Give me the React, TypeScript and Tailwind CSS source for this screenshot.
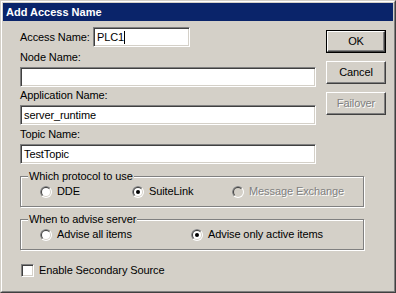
import React from "react";

function Radio({ checked = false, disabled = false }: { checked?: boolean; disabled?: boolean }) {
  return (
    <svg width="12" height="12" viewBox="0 0 12 12" className="shrink-0">
      <defs>
        <clipPath id="tl">
          <polygon points="0,0 12,0 0,12" />
        </clipPath>
      </defs>
      <circle cx="6" cy="6" r="6" fill="#ffffff" />
      <circle cx="6" cy="6" r="6" fill="#808080" clipPath="url(#tl)" />
      <circle cx="6" cy="6" r="5" fill="#d4d0c8" />
      <circle cx="6" cy="6" r="5" fill="#404040" clipPath="url(#tl)" />
      <circle cx="6" cy="6" r="4" fill={disabled ? "#d4d0c8" : "#ffffff"} />
      {checked && <circle cx="6" cy="6" r="2" fill="#000000" />}
    </svg>
  );
}

function TextBox({ value, caret = false, className = "" }: { value: string; caret?: boolean; className?: string }) {
  return (
    <div
      className={`h-[20px] bg-white border border-t-[#808080] border-l-[#808080] border-b-white border-r-white shadow-[inset_1px_1px_0_#404040,inset_-1px_-1px_0_#d4d0c8] flex items-center pl-[3px] ${className}`}
    >
      <span className="leading-[13px]">{value}</span>
      {caret && <span className="w-px h-[13px] bg-black" />}
    </div>
  );
}

function Button({ label, def = false, disabled = false }: { label: string; def?: boolean; disabled?: boolean }) {
  const inner = (
    <div className="w-full h-full border border-t-white border-l-white border-b-[#404040] border-r-[#404040] shadow-[inset_-1px_-1px_0_#808080] flex items-center justify-center">
      <span className={disabled ? "text-[#808080] [text-shadow:1px_1px_0_#ffffff]" : ""}>{label}</span>
    </div>
  );
  return (
    <div className={`w-[60px] h-[23px] ${def ? "border border-black" : ""}`}>{inner}</div>
  );
}

function Group({ title, children }: { title: string; children: React.ReactNode }) {
  return (
    <div className="relative w-[344px] h-[31px] border border-[#808080] shadow-[1px_1px_0_#ffffff,inset_1px_1px_0_#ffffff] flex items-center">
      <span className="absolute left-[7px] top-[-7px] bg-[#d4d0c8] px-[1px] leading-[13px]">{title}</span>
      {children}
    </div>
  );
}

function RadioItem({ label, checked = false, disabled = false, w }: { label: string; checked?: boolean; disabled?: boolean; w: string }) {
  return (
    <div className={`flex items-center gap-[5px] ${w}`}>
      <Radio checked={checked} disabled={disabled} />
      <span className={`leading-[13px] ${disabled ? "text-[#808080] [text-shadow:1px_1px_0_#ffffff]" : ""}`}>{label}</span>
    </div>
  );
}

export default function App() {
  return (
    <div className="w-[396px] h-[293px] bg-[#d4d0c8] font-['Liberation_Sans',Arial,sans-serif] text-[11px] tracking-[-0.1px] text-black overflow-hidden">
      <div className="w-full h-full border border-t-[#d4d0c8] border-l-[#d4d0c8] border-b-[#404040] border-r-[#404040]">
        <div className="w-full h-full border border-t-white border-l-white border-b-[#808080] border-r-[#808080] p-px flex flex-col">
          <div className="h-[18px] bg-[#0a246a] text-white font-bold text-[11px] tracking-normal flex items-center pl-[3px] shrink-0">
            Add Access Name
          </div>
          <div className="flex-1 pl-[17px] pt-[6px] flex flex-col">
            <div className="flex">
              <div className="w-[296px] flex flex-col">
                <div className="flex items-center">
                  <span className="w-[73px] leading-[13px]">Access Name:</span>
                  <TextBox value="PLC1" caret className="w-[97px]" />
                </div>
                <div className="mt-[4px] h-[13px] leading-[13px]">Node Name:</div>
                <TextBox value="" className="mt-[3px] w-[296px]" />
                <div className="mt-[2px] h-[13px] leading-[13px]">Application Name:</div>
                <TextBox value="server_runtime" className="mt-[3px] w-[296px]" />
                <div className="mt-[3px] h-[13px] leading-[13px]">Topic Name:</div>
                <TextBox value="TestTopic" className="mt-[3px] w-[296px]" />
              </div>
              <div className="ml-[10px] mt-[3px] flex flex-col gap-[8px]">
                <Button label="OK" def />
                <Button label="Cancel" />
                <Button label="Failover" disabled />
              </div>
            </div>
            <div className="mt-[12px]">
              <Group title="Which protocol to use">
                <div className="flex pl-[19px]">
                  <RadioItem label="DDE" w="w-[92px]" />
                  <RadioItem label="SuiteLink" checked w="w-[100px]" />
                  <RadioItem label="Message Exchange" disabled w="w-[120px]" />
                </div>
              </Group>
            </div>
            <div className="mt-[12px]">
              <Group title="When to advise server">
                <div className="flex pl-[19px]">
                  <RadioItem label="Advise all items" w="w-[151px]" />
                  <RadioItem label="Advise only active items" checked w="w-[150px]" />
                </div>
              </Group>
            </div>
            <div className="mt-[14px] flex items-center gap-[5px] pl-px">
              <div className="w-[13px] h-[13px] bg-white border border-t-[#808080] border-l-[#808080] border-b-white border-r-white shadow-[inset_1px_1px_0_#404040,inset_-1px_-1px_0_#d4d0c8]" />
              <span className="leading-[13px]">Enable Secondary Source</span>
            </div>
          </div>
        </div>
      </div>
    </div>
  );
}
